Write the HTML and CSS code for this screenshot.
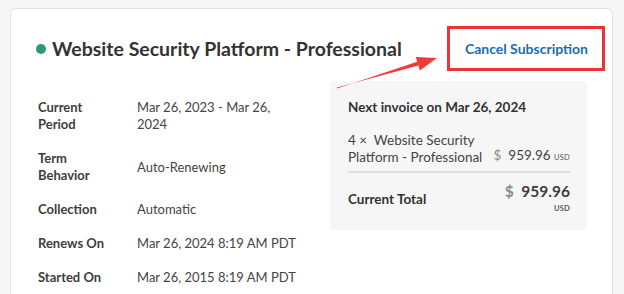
FILE: index.html
```html
<!DOCTYPE html>
<html lang="en">
<head>
    <meta charset="UTF-8">
    <meta name="viewport" content="width=device-width, initial-scale=1.0">
    <title>Subscription</title>
    <link rel="stylesheet" href="styles.css">
</head>
<body>
    <div class="card">
        <div class="card-header">
            <h1 class="sub-title"><span class="status-dot"></span>Website Security Platform - Professional</h1>
            <div class="highlight-box">
                <a href="#" class="cancel-link">Cancel Subscription</a>
            </div>
        </div>

        <div class="card-body">
            <dl class="details">
                <div class="detail-row">
                    <dt>Current Period</dt>
                    <dd>Mar 26, 2023 - Mar 26, 2024</dd>
                </div>
                <div class="detail-row">
                    <dt>Term Behavior</dt>
                    <dd>Auto-Renewing</dd>
                </div>
                <div class="detail-row">
                    <dt>Collection</dt>
                    <dd>Automatic</dd>
                </div>
                <div class="detail-row">
                    <dt>Renews On</dt>
                    <dd>Mar 26, 2024 8:19 AM PDT</dd>
                </div>
                <div class="detail-row">
                    <dt>Started On</dt>
                    <dd>Mar 26, 2015 8:19 AM PDT</dd>
                </div>
            </dl>

            <div class="invoice">
                <div class="invoice-title">Next invoice on Mar 26, 2024</div>
                <div class="invoice-item">
                    <div class="item-desc">4 &times;&nbsp; Website Security Platform - Professional</div>
                    <div class="price"><span class="cur">$</span>&nbsp; 959.96 <span class="code">USD</span></div>
                </div>
                <div class="invoice-total">
                    <div class="total-label">Current Total</div>
                    <div class="total-amount">
                        <div><span class="cur">$</span>&nbsp; 959.96</div>
                        <div class="code">USD</div>
                    </div>
                </div>
            </div>
        </div>
    </div>

    <!-- annotation arrow -->
    <svg class="arrow" width="624" height="294" viewBox="0 0 624 294">
        <polygon points="337,88.6 417.2,61.8 415.8,57 437,58 419.8,70.4 418.4,65.6 337,87.4" fill="#f13a3a"/>
    </svg>
</body>
</html>
```

FILE: styles.css
```css
body { margin: 0; padding: 8px 11px 0 10px; background-color: #f6f6f6; font-family: Lato, "Open Sans", sans-serif; color: #3d3d3d; }
.card { background-color: #fff; border: 1px solid #e2e2e2; border-radius: 6px; padding: 17px 25px 40px 25px; min-height: 300px; }
.card-header { display: flex; justify-content: space-between; align-items: center; }
.sub-title { margin: 0; font-size: 19.5px; font-weight: 700; color: #333; display: flex; align-items: center; }
.status-dot { width: 10px; height: 10px; border-radius: 50%; background-color: #2e9a70; margin-right: 6px; }
.highlight-box { border: 3px solid #ee3338; padding: 10px 14px 11px 15px; margin-right: -18px; line-height: 17px; }
.cancel-link { color: #1c6cab; font-weight: 700; font-size: 14px; text-decoration: none; }

.card-body { display: grid; grid-template-columns: 1fr 257px; column-gap: 20px; margin-top: 10px; }
.details { margin: 18px 0 0 2px; font-size: 13px; line-height: 17px; }
.detail-row { display: grid; grid-template-columns: 99px 160px; align-items: center; margin-bottom: 17px; }
.detail-row dt { font-weight: 700; color: #3d3d3d; padding-right: 20px; }
.detail-row dd { margin: 0; color: #444; }

.invoice { background-color: #f6f6f6; border-radius: 4px; padding: 18px 17px 13px 18px; font-size: 13.5px; line-height: 17px; align-self: start; }
.invoice-title { font-weight: 700; color: #333; margin-bottom: 16px; }
.invoice-item { display: flex; justify-content: space-between; align-items: flex-end; padding-bottom: 5px; border-bottom: 2px solid #dedede; }
.item-desc { width: 150px; color: #444; }
.price { color: #444; white-space: nowrap; }
.cur { color: #8a8a8a; }
.code { font-size: 7.5px; letter-spacing: 0.2px; color: #555; }
.invoice-total { display: flex; justify-content: space-between; align-items: center; padding-top: 8px; }
.total-label { font-weight: 700; color: #333; }
.total-amount { text-align: right; font-weight: 700; font-size: 15.5px; line-height: 20px; }
.total-amount .code { font-size: 7.5px; line-height: 16px; }

.arrow { position: absolute; left: 0; top: 0; pointer-events: none; }
```
